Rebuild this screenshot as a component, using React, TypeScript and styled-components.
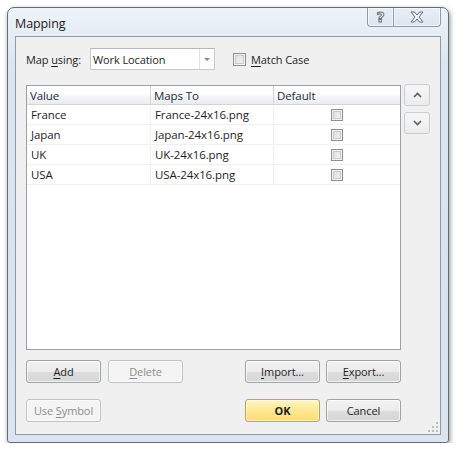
import styled, { createGlobalStyle } from 'styled-components';

const GlobalStyle = createGlobalStyle`
  html, body {
    margin: 0;
    padding: 0;
    background: #ffffff;
  }
  body {
    font-family: "Open Sans", "Noto Sans", sans-serif;
    font-size: 11px;
    letter-spacing: -0.1px;
    color: #1e1e1e;
  }
`

const Window = styled.div`
  margin: 7px 0 0 7px;
  width: 442px;
  height: 436px;
  box-sizing: border-box;
  border: 1px solid #5f6d7c;
  border-radius: 7px 7px 3px 3px;
  background: linear-gradient(180deg, #eef3f9 0%, #dde6f0 12%, #d9e3ee 60%, #dbe4ef 100%);
  box-shadow: 1px 2px 5px rgba(0, 0, 0, 0.45);
  padding: 0 7px 7px 7px;
  display: flex;
  flex-direction: column;
`

const TitleBar = styled.div`
  height: 28px;
  display: flex;
  align-items: flex-start;
`

const Title = styled.div`
  font-size: 12.5px;
  color: #1a1a1a;
  padding-top: 7px;
`

const CaptionButtons = styled.div`
  margin-left: auto;
  display: flex;
  height: 19px;
`

const CaptionButton = styled.div<{ $wide?: boolean }>`
  width: ${p => (p.$wide ? 47 : 27)}px;
  height: 19px;
  box-sizing: border-box;
  border: 1px solid #8d9cad;
  border-top: none;
  border-left: ${p => (p.$wide ? 'none' : '1px solid #8d9cad')};
  border-radius: ${p => (p.$wide ? '0 0 4px 0' : '0 0 0 4px')};
  background: linear-gradient(180deg, #e6edf5 0%, #dde6ef 100%);
  box-shadow: inset 0 0 0 1px rgba(255, 255, 255, 0.6);
  display: flex;
  align-items: center;
  justify-content: center;
`

const HelpGlyph = styled.span`
  font-family: "DejaVu Sans", sans-serif;
  font-size: 14px;
  font-weight: bold;
  color: #f4f6f8;
  -webkit-text-stroke: 1px #6d6f72;
  line-height: 1;
  margin-top: -1px;
`

const Client = styled.div`
  position: relative;
  flex: 1;
  box-sizing: border-box;
  border: 1px solid #8c9aaa;
  background: #f0f0f0;
  padding: 11px 0 0 10px;
  display: flex;
  flex-direction: column;
`

const TopRow = styled.div`
  display: flex;
  align-items: center;
  height: 22px;
`

const Label = styled.span`
  width: 64px;
`

const Key = styled.u`
  text-decoration: underline;
  text-underline-offset: 2px;
`

const Combo = styled.div`
  width: 125px;
  height: 22px;
  box-sizing: border-box;
  border: 1px solid #c7cacf;
  border-top-color: #b4b8be;
  background: #ffffff;
  display: flex;
  align-items: stretch;
`

const ComboText = styled.div`
  flex: 1;
  padding-left: 2px;
  display: flex;
  align-items: center;
`

const ComboArrow = styled.div`
  width: 14px;
  border-left: 1px solid #e2e3e5;
  display: flex;
  align-items: center;
  justify-content: center;
  &::after {
    content: '';
    border-left: 3px solid transparent;
    border-right: 3px solid transparent;
    border-top: 3px solid #8a8a8a;
  }
`

const CheckLabel = styled.label`
  margin-left: 18px;
  display: flex;
  align-items: center;
  gap: 5px;
`

const Check = styled.span<{ $size?: number }>`
  display: inline-block;
  width: ${p => p.$size ?? 13}px;
  height: ${p => p.$size ?? 13}px;
  box-sizing: border-box;
  border: 1px solid #8f8f8f;
  background: #f4f4f4;
  box-shadow: inset 0 0 0 1px #f4f4f4, inset 0 0 0 2px #c9c9c9;
  background-image: linear-gradient(135deg, #dcdcdc 0%, #f6f6f6 100%);
`

const Middle = styled.div`
  margin-top: 15px;
  display: flex;
  gap: 3px;
`

const List = styled.div`
  width: 375px;
  height: 265px;
  box-sizing: border-box;
  border: 1px solid #9aa0a8;
  background: #ffffff;
`

const Row = styled.div<{ $head?: boolean }>`
  display: grid;
  grid-template-columns: 124px 123px 1fr;
  height: ${p => (p.$head ? 19 : 20)}px;
  box-sizing: border-box;
  border-bottom: 1px solid ${p => (p.$head ? '#d5d5d5' : '#f0f0f0')};
  background: ${p => (p.$head ? 'linear-gradient(180deg, #ffffff 0%, #ffffff 45%, #f3f4f6 60%, #eaecef 100%)' : '#ffffff')};
  color: ${p => (p.$head ? '#1c2a3c' : '#1e1e1e')};
  font-size: 11.5px;
`

const Cell = styled.div<{ $head?: boolean; $center?: boolean }>`
  display: flex;
  align-items: center;
  justify-content: ${p => (p.$center ? 'center' : 'flex-start')};
  padding-left: ${p => (p.$center ? 0 : p.$head ? 3 : 4)}px;
  border-right: 1px solid ${p => (p.$head ? '#d5d5d5' : '#f0f0f0')};
  white-space: nowrap;
  overflow: hidden;
  &:last-child {
    border-right: none;
  }
`

const SideButtons = styled.div`
  display: flex;
  flex-direction: column;
  gap: 6px;
  margin-top: -1px;
`

const ArrowButton = styled.div`
  width: 26px;
  height: 22px;
  box-sizing: border-box;
  border: 1px solid #c8ccd1;
  border-radius: 3px;
  background: linear-gradient(180deg, #f6f6f6 0%, #ececec 100%);
  display: flex;
  align-items: center;
  justify-content: center;
`

const ButtonRow = styled.div<{ $top: number }>`
  margin-top: ${p => p.$top}px;
  width: 375px;
  display: flex;
  justify-content: space-between;
`

const Group = styled.div<{ $gap: number }>`
  display: flex;
  gap: ${p => p.$gap}px;
`

const Button = styled.div<{ $disabled?: boolean; $primary?: boolean }>`
  width: 75px;
  height: 23px;
  box-sizing: border-box;
  border-radius: 3px;
  display: flex;
  align-items: center;
  justify-content: center;
  white-space: pre;
  border: 1px solid ${p => (p.$disabled ? '#bfc3c8' : p.$primary ? '#c2a25a' : '#9ea3a8')};
  color: ${p => (p.$disabled ? '#8d8d8d' : '#1e1e1e')};
  font-weight: ${p => (p.$primary ? 'bold' : 'normal')};
  background: ${p =>
    p.$disabled
      ? '#f4f4f4'
      : p.$primary
      ? 'linear-gradient(180deg, #fff6c4 0%, #ffe892 50%, #fedc74 100%)'
      : 'linear-gradient(180deg, #f2f2f2 0%, #ebebeb 50%, #dddddd 52%, #d6d6d6 100%)'};
  box-shadow: inset 0 0 0 1px ${p => (p.$disabled ? '#fafafa' : p.$primary ? 'rgba(255,255,255,0.5)' : 'rgba(255,255,255,0.7)')};
`

const Grip = styled.svg`
  position: absolute;
  right: 1px;
  bottom: 1px;
`

const rows: [string, string][] = [
  ['France', 'France-24x16.png'],
  ['Japan', 'Japan-24x16.png'],
  ['UK', 'UK-24x16.png'],
  ['USA', 'USA-24x16.png'],
];

const Chevron = ({ up }: { up?: boolean }) => (
  <svg width="9" height="6" viewBox="0 0 9 6">
    <path d={up ? 'M1 5 L4.5 1.5 L8 5' : 'M1 1 L4.5 4.5 L8 1'} fill="none" stroke="#5c5c5c" strokeWidth="1.6" />
  </svg>
);

const App = () => {
  return (
    <>
      <GlobalStyle />
      <Window>
        <TitleBar>
          <Title>Mapping</Title>
          <CaptionButtons>
            <CaptionButton>
              <HelpGlyph>?</HelpGlyph>
            </CaptionButton>
            <CaptionButton $wide>
              <svg width="14" height="12" viewBox="0 0 14 12">
                <path
                  d="M1 1 H4.5 L7 4 L9.5 1 H13 L9 6 L13 11 H9.5 L7 8 L4.5 11 H1 L5 6 Z"
                  fill="#f4f6f8"
                  stroke="#6a6d70"
                  strokeWidth="1"
                  strokeLinejoin="round"
                />
              </svg>
            </CaptionButton>
          </CaptionButtons>
        </TitleBar>
        <Client>
          <TopRow>
            <Label>Map <Key>u</Key>sing:</Label>
            <Combo>
              <ComboText>Work Location</ComboText>
              <ComboArrow />
            </Combo>
            <CheckLabel>
              <Check />
              <span><Key>M</Key>atch Case</span>
            </CheckLabel>
          </TopRow>
          <Middle>
            <List>
              <Row $head>
                <Cell $head>Value</Cell>
                <Cell $head>Maps To</Cell>
                <Cell $head>Default</Cell>
              </Row>
              {rows.map(([value, file]) => (
                <Row key={value}>
                  <Cell>{value}</Cell>
                  <Cell>{file}</Cell>
                  <Cell $center><Check $size={12} /></Cell>
                </Row>
              ))}
            </List>
            <SideButtons>
              <ArrowButton><Chevron up /></ArrowButton>
              <ArrowButton><Chevron /></ArrowButton>
            </SideButtons>
          </Middle>
          <ButtonRow $top={10}>
            <Group $gap={7}>
              <Button><span><Key>A</Key>dd</span></Button>
              <Button $disabled><span><Key>D</Key>elete</span></Button>
            </Group>
            <Group $gap={6}>
              <Button><span><Key>I</Key>mport...</span></Button>
              <Button><span><Key>E</Key>xport...</span></Button>
            </Group>
          </ButtonRow>
          <ButtonRow $top={16}>
            <Button $disabled><span>Use <Key>S</Key>ymbol</span></Button>
            <Group $gap={6}>
              <Button $primary>OK</Button>
              <Button>Cancel</Button>
            </Group>
          </ButtonRow>
          <Grip width="11" height="11" viewBox="0 0 11 11">
            {[[8, 0], [8, 4], [4, 4], [8, 8], [4, 8], [0, 8]].map(([x, y]) => (
              <rect key={`${x}-${y}`} x={x} y={y} width="2" height="2" fill="#b9bdc2" />
            ))}
          </Grip>
        </Client>
      </Window>
    </>
  );
};

export default App;
